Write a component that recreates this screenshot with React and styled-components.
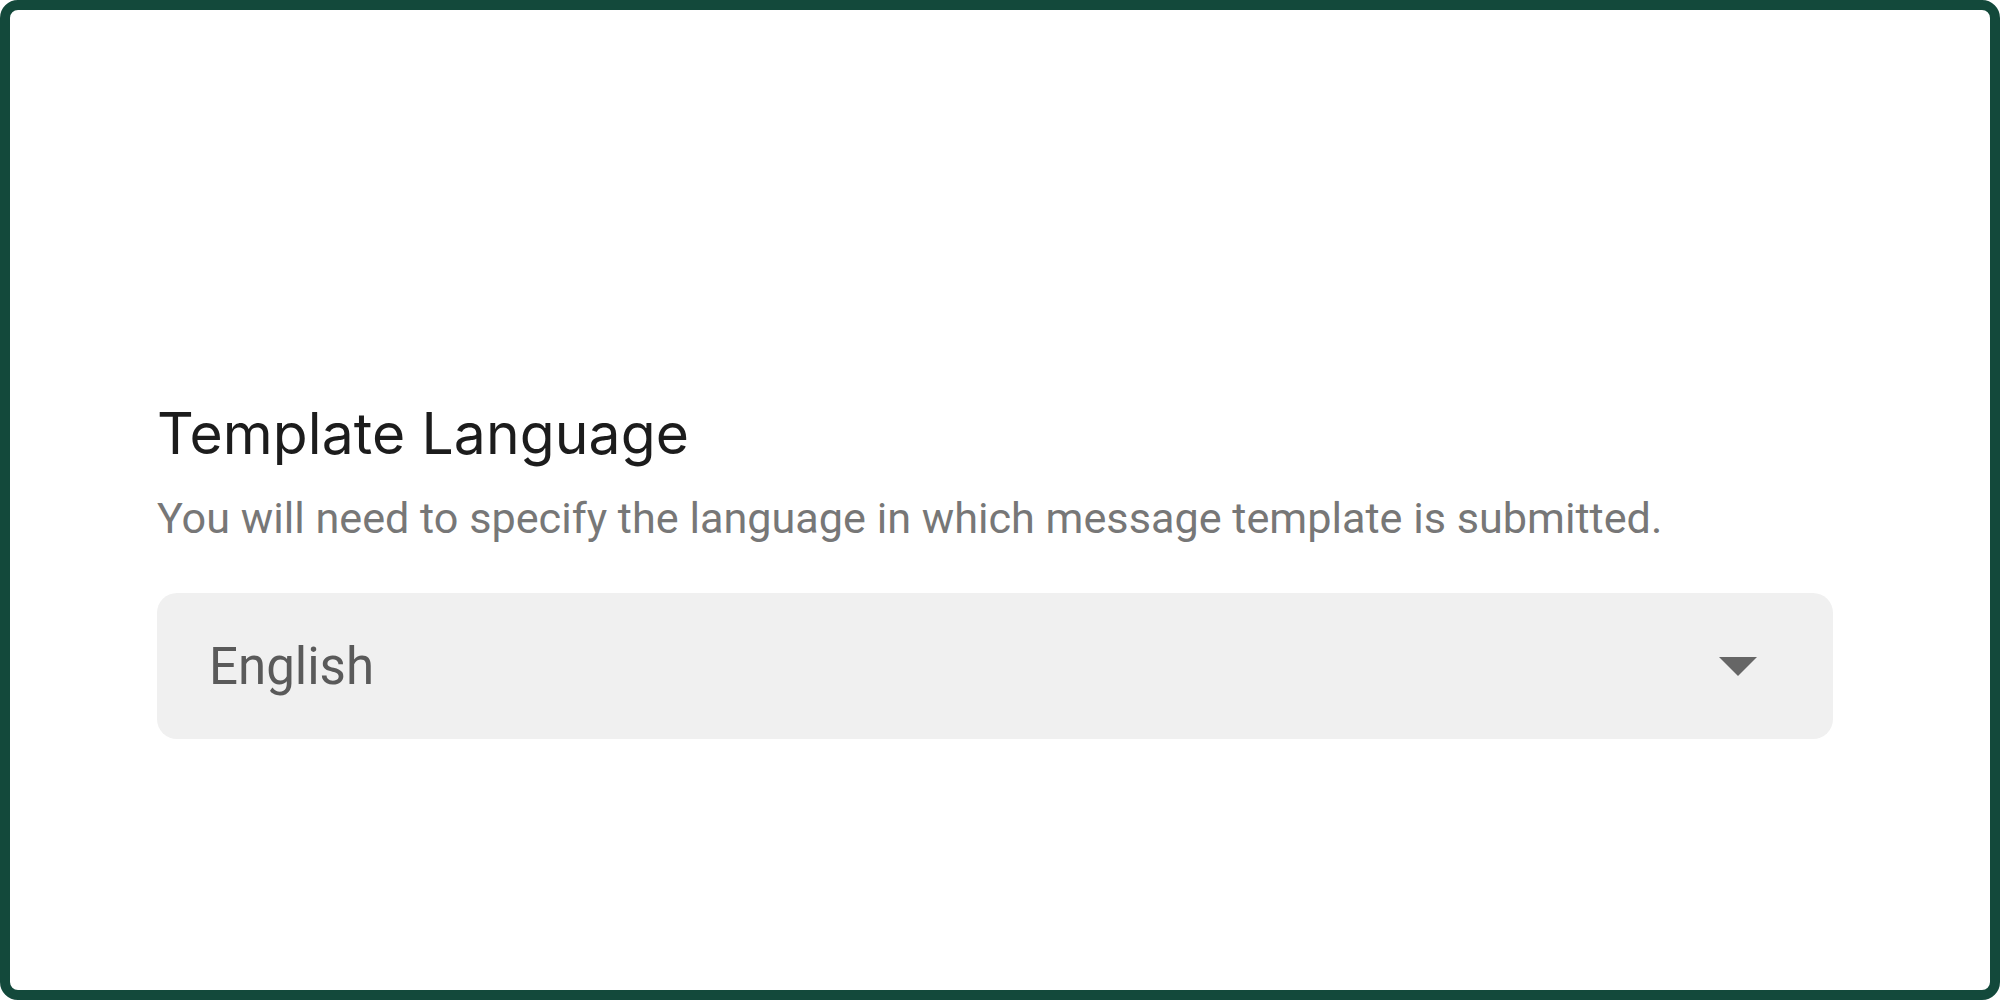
import React from "react";
import styled, { createGlobalStyle } from "styled-components";

const Global = createGlobalStyle`
  html, body { margin: 0; padding: 0; background: #ffffff; }
  * { box-sizing: border-box; }
`;

const Frame = styled.div`
  width: 2000px;
  height: 1000px;
  border: 10px solid #13493b;
  border-radius: 18px;
  background: #ffffff;
  padding: 395px 157px 0 147px;
  display: flex;
  flex-direction: column;
`;

const Title = styled.h2`
  margin: 0;
  font-family: Inter, "Noto Sans", sans-serif;
  font-weight: 400;
  font-size: 57px;
  line-height: 57px;
  color: #1c1c1c;
  letter-spacing: 0.1px;
`;

const Hint = styled.p`
  margin: 35px 0 0 0;
  font-family: Roboto, "Liberation Sans", sans-serif;
  font-weight: 400;
  font-size: 43.2px;
  line-height: 43px;
  color: #777777;
  white-space: nowrap;
`;

const Select = styled.div`
  margin-top: 53px;
  height: 146px;
  border-radius: 20px;
  background: #f0f0f0;
  display: flex;
  align-items: center;
  justify-content: space-between;
  padding: 0 76px 0 52px;
`;

const Value = styled.span`
  font-family: Roboto, "Liberation Sans", sans-serif;
  font-size: 51px;
  line-height: 1;
  color: #5a5a5a;
`;

const Caret = styled.svg`
  width: 38px;
  height: 19px;
  display: block;
`;

export default function App() {
  return (
    <>
      <Global />
      <Frame>
        <Title>Template Language</Title>
        <Hint>You will need to specify the language in which message template is submitted.</Hint>
        <Select>
          <Value>English</Value>
          <Caret viewBox="0 0 38 19">
            <polygon points="0,0 38,0 19,19" fill="#666666" />
          </Caret>
        </Select>
      </Frame>
    </>
  );
}
